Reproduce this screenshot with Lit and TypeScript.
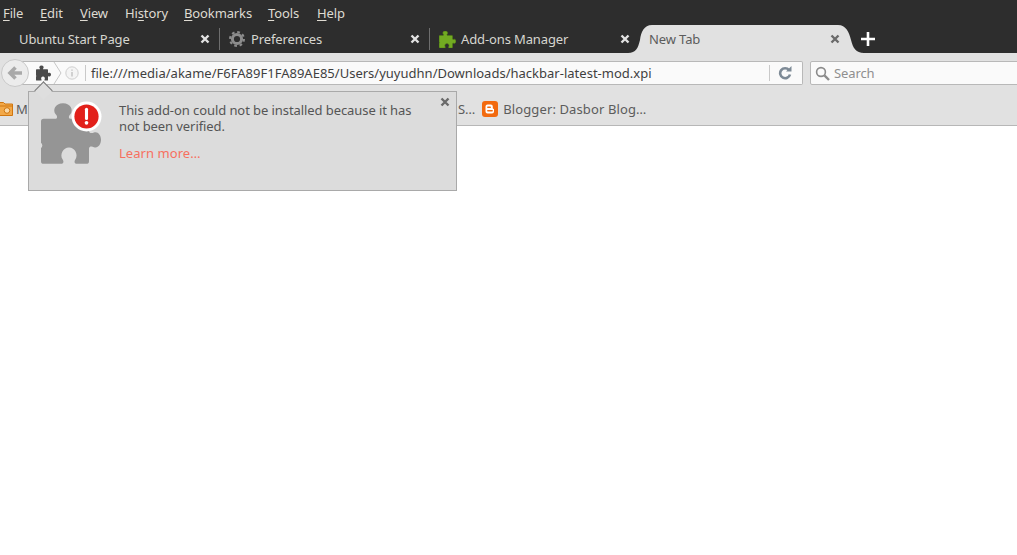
import { LitElement, html, css } from "lit";
import { customElement } from "lit/decorators.js";

const PUZZLE =
  "M24 62 L58 62 C66 62 66 54 60 48 C50 36 58 15 82 15 C106 15 114 36 104 48 C98 54 98 62 106 62 L152 62 Q160 62 160 70 L160 98 C160 106 168 106 175 103 C186 99 196 110 196 125 C196 140 186 151 175 147 C168 144 160 144 160 152 L160 189 Q160 197 152 197 L124 197 C116 197 115 190 119 184 C129 170 118 148 100 148 C82 148 71 170 81 184 C85 190 84 197 76 197 L24 197 Q16 197 16 189 L16 150 Q24 142 16 134 L16 70 Q16 62 24 62Z";

const puzzle = (cls: string) => html`<svg class=${cls} viewBox="16 15 180 182"><path d=${PUZZLE}></path></svg>`;
const closeX = () => html`<svg class="x" viewBox="0 0 10 10"><path d="M1.5 1.5 L8.5 8.5 M8.5 1.5 L1.5 8.5"></path></svg>`;

const gear = html`<svg class="gear" viewBox="0 0 16 16">
  <circle cx="8" cy="8" r="4.6" fill="none" stroke="#8c8c8c" stroke-width="3"></circle>
  <circle cx="8" cy="8" r="7" fill="none" stroke="#8c8c8c" stroke-width="2" stroke-dasharray="2.75 2.75"></circle>
</svg>`;

const MENU: [string, string, string][] = [
  ["", "F", "ile"],
  ["", "E", "dit"],
  ["", "V", "iew"],
  ["Hi", "s", "tory"],
  ["", "B", "ookmarks"],
  ["", "T", "ools"],
  ["", "H", "elp"],
];

@customElement("app-root")
export class AppRoot extends LitElement {
  static styles = css`
    :host { display: block; width: 1017px; height: 555px; overflow: hidden; background: #fff; position: relative;
      font-family: "Noto Sans", sans-serif; font-size: 13px; letter-spacing: -0.12px; }
    .menubar { height: 25px; background: #2d2d2d; color: #dfdbd2; display: grid; padding-left: 3px; align-items: center;
      grid-template-columns: 37px 40px 45px 59px 84px 49px auto; }
    .menubar u { text-underline-offset: 2px; }
    .tabs { height: 28px; background: #2d2d2d; display: flex; align-items: center; }
    .tab { position: relative; box-sizing: border-box; width: 210px; height: 28px; display: flex; align-items: center;
      padding: 0 8px 0 9px; color: #d6d6d0; }
    .tab.first { width: 220px; padding-left: 19px; }
    .tab.sep::after { content: ""; position: absolute; right: 0; top: 3px; bottom: 3px; width: 1px; background: #6e6e6e; }
    .tab.active { color: #5c5c5c; }
    .tab-bg { position: absolute; left: -12px; top: 0; width: 236px; height: 28px; fill: #e1e1e1; }
    .tab > span, .tab > .x, .tab > .gear, .tab > .green { position: relative; }
    .tab .label { flex: 1; white-space: nowrap; }
    .gear { width: 16px; height: 16px; margin-right: 6px; flex: none; }
    .green { width: 17px; height: 17px; margin-right: 5px; fill: #72aa22; stroke: #527f14; stroke-width: 6; flex: none; }
    .x { width: 10px; height: 10px; flex: none; margin-right: 2px; fill: none; stroke: #e2e2e2; stroke-width: 2.4; }
    .active .x, .pop-close .x { stroke: #6a6a6a; }
    .plus { width: 14px; height: 14px; margin-left: 11px; stroke: #fff; stroke-width: 2.6; fill: none; flex: none; }

    .toolbar { height: 40px; box-sizing: border-box; background: #e1e1e1; padding: 8px 0 0 1px; display: flex; align-items: flex-start; }
    .back { position: relative; z-index: 1; flex: none; box-sizing: border-box; width: 28px; height: 28px; margin-top: -2px; border-radius: 50%;
      background: #ececec; border: 1px solid #c9c9c9; display: flex; align-items: center; justify-content: center; }
    .back svg { width: 16px; height: 14px; fill: none; stroke: #a9a9a9; stroke-width: 3.6; }
    .url { flex: none; box-sizing: border-box; width: 781px; height: 24px; margin-left: -7px; background: #fafafa; border: 1px solid #b8b8b8;
      border-left: 0; border-radius: 0 2px 2px 0; display: flex; align-items: center; padding: 0 9px 0 14px; color: #3f3f3f; position: relative; }
    .id { width: 15px; height: 16px; fill: #4a4a4a; flex: none; }
    .chev { width: 9px; height: 22px; margin-left: 2px; fill: none; stroke: #c6c6c6; stroke-width: 1; flex: none; }
    .info { width: 14px; height: 14px; margin-left: 3px; flex: none; }
    .vsep { width: 1px; height: 16px; background: #c9c9c9; flex: none; }
    .vsep.a { margin-left: 6px; }
    .url-text { margin-left: 5px; white-space: nowrap; flex: 1; letter-spacing: 0.01px; }
    .reload { width: 14px; height: 14px; margin: 0 1px 0 8px; flex: none; fill: none; stroke: #7d8a96; stroke-width: 2.6; }
    .search { flex: none; box-sizing: border-box; width: 240px; height: 24px; margin-left: 7px; background: #fafafa; border: 1px solid #b8b8b8;
      border-radius: 2px; display: flex; align-items: center; padding-left: 4px; color: #8f8f8f; }
    .search svg { width: 15px; height: 15px; margin-right: 4px; fill: none; stroke: #8b8b8b; stroke-width: 1.6; }

    .bookmarks { height: 33px; box-sizing: border-box; background: #e1e1e1; border-bottom: 1px solid #b7b7b7; display: flex; align-items: center;
      color: #5c5c5c; padding-bottom: 1px; overflow: hidden; }
    .folder { width: 15px; height: 15px; flex: none; margin-left: -2px; margin-right: 3px; }
    .bm-first { flex: none; width: 12px; white-space: nowrap; }
    .bm-second { flex: none; margin-left: 430px; white-space: nowrap; }
    .bm-last { white-space: nowrap; letter-spacing: 0.12px; }
    .blogger { width: 16px; height: 16px; margin-left: 7px; margin-right: 5px; flex: none; }

    .popup { position: absolute; left: 28px; top: 91px; box-sizing: border-box; width: 429px; height: 100px; background: #dcdcdc;
      border: 1px solid #a9a9a9; display: flex; padding: 10px 0 0 12px; color: #555; }
    .popup::before { content: ""; position: absolute; left: 8px; top: -8px; width: 13px; height: 13px; background: #dedede;
      border-top: 1px solid #777; border-left: 1px solid #777; box-sizing: border-box; transform: rotate(45deg); }
    .icon-wrap { position: relative; width: 61px; height: 62px; flex: none; margin-top: 1px; }
    .big { width: 60px; height: 61px; fill: #959595; }
    .alert { position: absolute; left: 30px; top: -2px; width: 31px; height: 31px; }
    .msg { margin-left: 17px; width: 300px; line-height: 16px; letter-spacing: -0.08px; }
    .msg p { margin: 0; }
    .learn { margin-top: 11px !important; color: #f7705f; letter-spacing: 0.05px; }
    .pop-close { position: absolute; right: 4px; top: 5px; line-height: 0; }
  `;

  render() {
    return html`
      <div class="menubar">${MENU.map(([a, k, b]) => html`<span>${a}<u>${k}</u>${b}</span>`)}</div>
      <div class="tabs">
        <div class="tab first sep"><span class="label">Ubuntu Start Page</span>${closeX()}</div>
        <div class="tab sep">${gear}<span class="label">Preferences</span>${closeX()}</div>
        <div class="tab">${puzzle("green")}<span class="label">Add-ons Manager</span>${closeX()}</div>
        <div class="tab active">
          <svg class="tab-bg" viewBox="0 0 236 28"><path d="M0 28 C8 28 10 23 12 15 C13 7 16 0 24 0 L210 0 C218 0 221 7 223 15 C225 23 228 28 236 28Z"></path></svg>
          <span class="label">New Tab</span>${closeX()}
        </div>
        <svg class="plus" viewBox="0 0 14 14"><path d="M7 0 V14 M0 7 H14"></path></svg>
      </div>
      <div class="toolbar">
        <div class="back"><svg viewBox="0 0 16 14"><path d="M15 7 H3 M8.5 1.5 L3 7 L8.5 12.5"></path></svg></div>
        <div class="url">
          ${puzzle("id")}
          <svg class="chev" viewBox="0 0 9 22"><path d="M1 0 L8 11 L1 22"></path></svg>
          <svg class="info" viewBox="0 0 14 14">
            <circle cx="7" cy="7" r="6.2" fill="#f4f4f4" stroke="#cfcfcf"></circle>
            <path d="M7 6 V10.5 M7 3.4 V4.8" stroke="#c4c4c4" stroke-width="1.5"></path>
          </svg>
          <div class="vsep a"></div>
          <span class="url-text">file:///media/akame/F6FA89F1FA89AE85/Users/yuyudhn/Downloads/hackbar-latest-mod.xpi</span>
          <div class="vsep"></div>
          <svg class="reload" viewBox="0 0 14 14">
            <path d="M11 4 A5 5 0 1 0 12 8.5"></path>
            <path d="M8 5.5 H13.5 V0 Z" fill="#7d8a96" stroke="none"></path>
          </svg>
        </div>
        <div class="search">
          <svg viewBox="0 0 15 15"><circle cx="6" cy="6" r="4.4"></circle><path d="M9.4 9.4 L14 14" stroke-width="2.4"></path></svg>
          <span>Search</span>
        </div>
      </div>
      <div class="bookmarks">
        <svg class="folder" viewBox="0 0 15 15">
          <path d="M0.5 3 V1.5 H5.5 L7 3 H14.5 V14.5 H0.5 Z" fill="#f2a848" stroke="#d0760f"></path>
          <path d="M0.5 5 H14.5" stroke="#d0760f"></path>
          <circle cx="9" cy="9.5" r="2.8" fill="#f9d9a8" stroke="#d0760f"></circle>
        </svg>
        <div class="bm-first">Most Visited</div>
        <div class="bm-second">S…</div>
        <svg class="blogger" viewBox="0 0 16 16">
          <rect width="16" height="16" rx="3" fill="#f26a0f"></rect>
          <path d="M5.5 3.5 H8.8 A2 2 0 0 1 10.8 5.5 V7 A1.2 1.2 0 0 0 12 8 V10.5 A2 2 0 0 1 10 12.5 H5.5 A2 2 0 0 1 3.5 10.5 V5.5 A2 2 0 0 1 5.5 3.5 Z" fill="#fff"></path>
          <path d="M5.8 6.2 H8.3 M5.8 9.8 H10.2" stroke="#f26a0f" stroke-width="1.4" stroke-linecap="round"></path>
        </svg>
        <span class="bm-last">Blogger: Dasbor Blog…</span>
      </div>
      <div class="popup">
        <div class="icon-wrap">
          ${puzzle("big")}
          <svg class="alert" viewBox="0 0 32 32">
            <circle cx="16" cy="16" r="15.5" fill="#fff"></circle>
            <circle cx="16" cy="16" r="12.5" fill="#e2201a"></circle>
            <path d="M16 8.5 V18" stroke="#fff" stroke-width="3.2" stroke-linecap="round"></path>
            <circle cx="16" cy="22.5" r="1.9" fill="#fff"></circle>
          </svg>
        </div>
        <div class="msg">
          <p>This add-on could not be installed because it has not been verified.</p>
          <p class="learn">Learn more…</p>
        </div>
        <div class="pop-close">${closeX()}</div>
      </div>
    `;
  }
}
